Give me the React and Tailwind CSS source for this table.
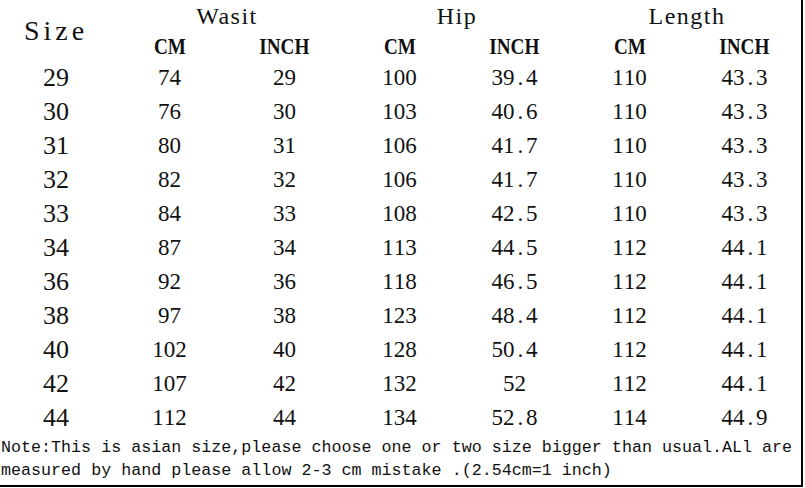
import React from 'react';

const rows = [
    ['29', '74', '29', '100', '39.4', '110', '43.3'],
    ['30', '76', '30', '103', '40.6', '110', '43.3'],
    ['31', '80', '31', '106', '41.7', '110', '43.3'],
    ['32', '82', '32', '106', '41.7', '110', '43.3'],
    ['33', '84', '33', '108', '42.5', '110', '43.3'],
    ['34', '87', '34', '113', '44.5', '112', '44.1'],
    ['36', '92', '36', '118', '46.5', '112', '44.1'],
    ['38', '97', '38', '123', '48.4', '112', '44.1'],
    ['40', '102', '40', '128', '50.4', '112', '44.1'],
    ['42', '107', '42', '132', '52', '112', '44.1'],
    ['44', '112', '44', '134', '52.8', '114', '44.9'],
];

const serif = "font-[family-name:'Liberation_Serif',serif]";

// SimSun style numbers: every char sits in a half-width cell
function Num({ value }) {
    return (
        <span className="inline-flex">
            {value.split('').map((ch, i) => (
                <span key={i} className="inline-block w-[0.5em] text-center">{ch}</span>
            ))}
        </span>
    );
}

function Unit({ children }) {
    return (
        <div className="flex items-center justify-center">
            <span className={`inline-block scale-x-[0.8] text-[24px] font-bold leading-none ${serif}`}>{children}</span>
        </div>
    );
}

function Group({ children }) {
    return (
        <div className={`col-span-2 flex items-center justify-center text-[24px] tracking-[1.5px] leading-none ${serif}`}>
            {children}
        </div>
    );
}

export default function App() {
    return (
        <div className="w-[805px] h-[488px] bg-white text-[#111]">
            <div className="w-[803px] h-[487px] border-r-2 border-b-2 border-black flex flex-col">
                <div className="grid grid-cols-[112px_repeat(6,115px)] grid-rows-[31px_30px]">
                    <div className={`row-span-2 flex items-center justify-center text-[28px] tracking-[4px] leading-none ${serif}`}>
                        Size
                    </div>
                    <Group>Wasit</Group>
                    <Group>Hip</Group>
                    <Group>Length</Group>
                    <Unit>CM</Unit>
                    <Unit>INCH</Unit>
                    <Unit>CM</Unit>
                    <Unit>INCH</Unit>
                    <Unit>CM</Unit>
                    <Unit>INCH</Unit>
                </div>

                {rows.map((row) => (
                    <div key={row[0]} className={`grid grid-cols-[112px_repeat(6,115px)] h-[34px] ${serif}`}>
                        {row.map((v, i) => (
                            <div
                                key={i}
                                className={`flex items-center justify-center leading-[34px] ${i === 0 ? 'text-[26px]' : 'text-[23px]'}`}
                            >
                                <Num value={v} />
                            </div>
                        ))}
                    </div>
                ))}

                <div className="pl-px pt-px font-['Liberation_Mono',monospace] text-[16.7px] leading-[23px] whitespace-nowrap">
                    <div>Note:This is asian size,please choose one or two size bigger than usual.ALl are</div>
                    <div>measured by hand please allow 2-3 cm mistake .(2.54cm=1 inch)</div>
                </div>
            </div>
        </div>
    );
}
